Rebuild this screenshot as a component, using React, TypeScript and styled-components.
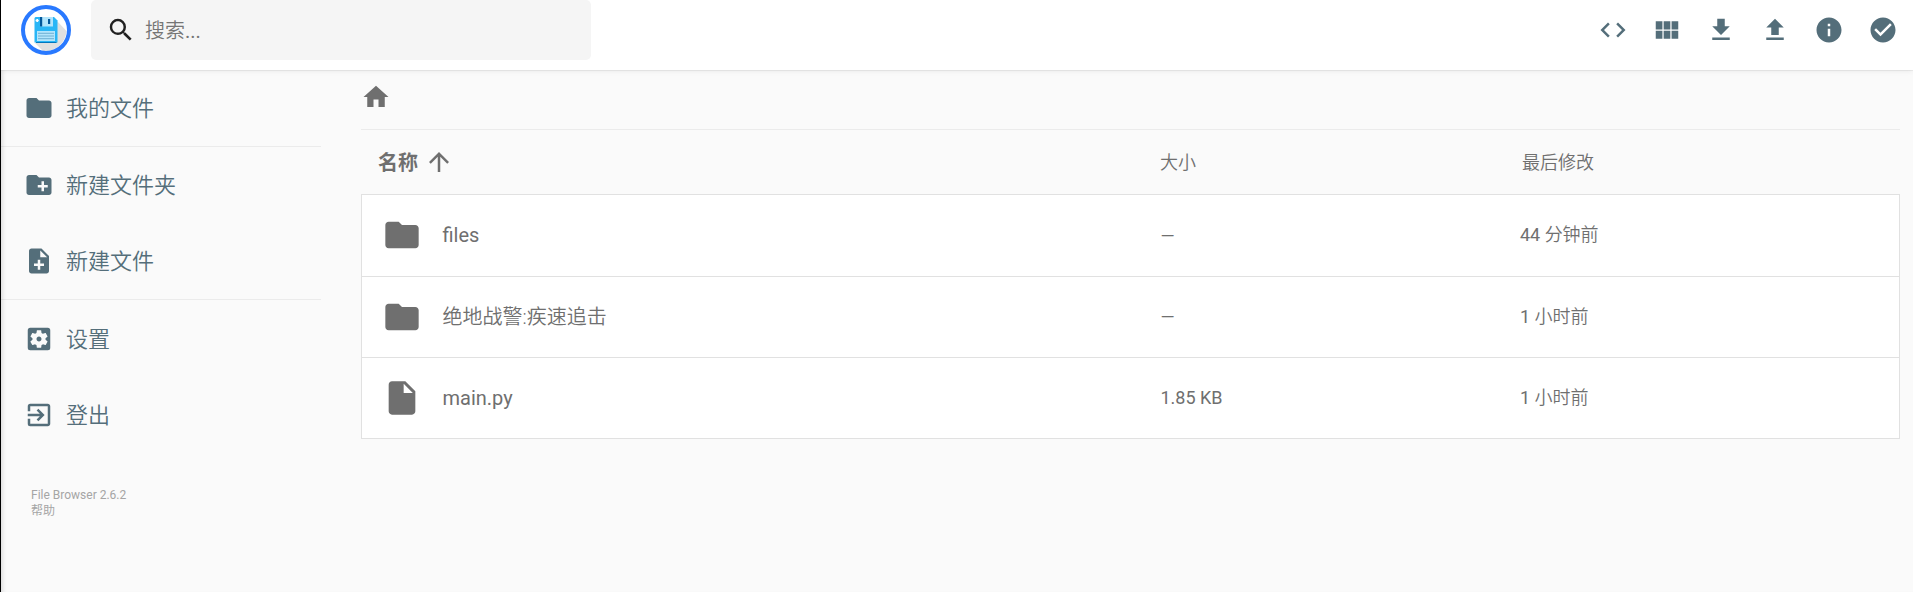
import React from 'react';
import styled, { createGlobalStyle, css } from 'styled-components';
import type { IconType } from 'react-icons';
import {
  MdArrowUpward,
  MdCheckCircle,
  MdCode,
  MdCreateNewFolder,
  MdExitToApp,
  MdFileDownload,
  MdFileUpload,
  MdFolder,
  MdHome,
  MdInfo,
  MdInsertDriveFile,
  MdNoteAdd,
  MdSearch,
  MdSettingsApplications,
  MdViewModule,
} from 'react-icons/md';

const colors = {
  slate: '#546e7a',
  text: '#6f6f6f',
  line: 'rgba(0, 0, 0, 0.06)',
  frame: '#e1e1e1',
};

const GlobalStyle = createGlobalStyle`
  * { box-sizing: border-box; }
  body {
    margin: 0;
    background: #fafafa;
    color: ${colors.text};
    font-family: Roboto, 'Noto Sans CJK SC', sans-serif;
    font-size: 20px;
    overflow: hidden;
  }
`;

const Window = styled.div`
  height: 592px;
  border-left: 1px solid #000;
  box-shadow: inset 5px 0 5px -4px rgba(0, 0, 0, 0.16);
`;

const Header = styled.header`
  position: relative;
  display: flex;
  align-items: flex-start;
  height: 70px;
  padding: 0 3px 0 20px;
  background: #fff;
  box-shadow: 0 1px 0 rgba(0, 0, 0, 0.05), 0 0 6px rgba(0, 0, 0, 0.1);
`;

const Logo = styled.svg`
  width: 50px;
  height: 50px;
  margin: 5px 20px 0 0;
`;

const SearchBox = styled.div`
  display: flex;
  align-items: center;
  width: 500px;
  height: 60px;
  padding: 0 15px;
  border-radius: 5px;
  background: #f5f5f5;
  color: #757575;

  svg {
    width: 30px;
    height: 30px;
    margin-right: 9px;
    color: #212121;
  }
`;

const Label = styled.span<{ $cjk?: boolean }>`
  padding-bottom: 2px;
  ${(p) => p.$cjk && css`font-weight: 350;`}
`;

const Actions = styled.div`
  display: flex;
  margin-left: auto;
`;

const ActionButton = styled.button`
  display: flex;
  align-items: center;
  height: 60px;
  padding: 0 12px;
  border: 0;
  background: none;
  color: ${colors.slate};

  svg {
    width: 30px;
    height: 30px;
  }
`;

const Body = styled.div`
  display: flex;
`;

const Sidebar = styled.nav`
  width: 320px;
  margin-right: 40px;
  flex: none;
`;

const NavGroup = styled.div<{ $last?: boolean }>`
  ${(p) => !p.$last && css`border-bottom: 1px solid ${colors.line};`}
  ${(p) => p.$last && css`padding-top: 1px;`}
`;

const NavItem = styled.a`
  display: flex;
  align-items: center;
  height: 76px;
  padding-left: 23px;
  color: ${colors.slate};
  font-size: 22px;

  svg {
    width: 30px;
    height: 30px;
    margin-right: 12px;
  }

  ${Label} {
    padding-bottom: 4px;
  }
`;

const Credits = styled.div`
  margin: 34px 0 0 30px;
  color: #a5a5a5;
  font-size: 12px;
  line-height: 16px;

  span {
    display: block;
  }
`;

const Main = styled.main`
  flex: 1;
  margin-right: 13px;
`;

const Breadcrumbs = styled.div`
  height: 60px;
  padding-top: 12px;
  border-bottom: 1px solid ${colors.line};

  svg {
    display: block;
    width: 30px;
    height: 30px;
  }
`;

const columns = css`
  display: grid;
  grid-template-columns: 778px 360px 1fr;
  align-items: center;
`;

const ListHeader = styled.div`
  ${columns}
  height: 64px;
  padding-left: 21px;
  font-size: 18px;
`;

const SortedColumn = styled.span`
  display: flex;
  align-items: center;
  margin-left: -4px;
  font-size: 20px;
  font-weight: 700;

  svg {
    width: 30px;
    height: 30px;
    margin-left: 6px;
  }
`;

const ModifiedHeading = styled(Label)`
  padding-left: 2px;
`;

const Listing = styled.div`
  border: 1px solid ${colors.frame};
  background: #fff;
`;

const FileRow = styled.div`
  ${columns}
  height: 81px;
  padding: 0 0 1px 20px;
  font-size: 18px;

  & + & {
    border-top: 1px solid ${colors.frame};
  }
`;

const FileName = styled.span`
  display: flex;
  align-items: center;
  font-size: 20px;

  svg {
    width: 40px;
    height: 40px;
    margin-right: 20.5px;
  }
`;

const Latin = styled.span`
  font-weight: 400;
`;

const Size = styled(Latin)`
  padding-left: 0.5px;
`;

const Modified = styled(Label)`
  padding-bottom: 4px;
`;

interface NavEntry {
  icon: IconType;
  label: string;
}

const navGroups: NavEntry[][] = [
  [{ icon: MdFolder, label: '我的文件' }],
  [
    { icon: MdCreateNewFolder, label: '新建文件夹' },
    { icon: MdNoteAdd, label: '新建文件' },
  ],
  [
    { icon: MdSettingsApplications, label: '设置' },
    { icon: MdExitToApp, label: '登出' },
  ],
];

const actions: { icon: IconType; title: string }[] = [
  { icon: MdCode, title: 'shell' },
  { icon: MdViewModule, title: 'view' },
  { icon: MdFileDownload, title: 'download' },
  { icon: MdFileUpload, title: 'upload' },
  { icon: MdInfo, title: 'info' },
  { icon: MdCheckCircle, title: 'select' },
];

const files = [
  { icon: MdFolder, name: 'files', cjk: false, size: '—', count: 44, unit: '分钟前' },
  { icon: MdFolder, name: '绝地战警:疾速追击', cjk: true, size: '—', count: 1, unit: '小时前' },
  { icon: MdInsertDriveFile, name: 'main.py', cjk: false, size: '1.85 KB', count: 1, unit: '小时前' },
];

function FloppyLogo() {
  return (
    <Logo viewBox="0 0 50 50">
      <circle cx="25" cy="25" r="23" fill="#fff" />
      <path d="M36 16L45.5 26A21.5 21.5 0 0 1 22 46L14 38z" fill="#e0e0e0" />
      <circle cx="25" cy="25" r="23" fill="none" stroke="#2979ff" strokeWidth="4" />
      <path d="M14.5 12H33L36.5 15.5V37.5H13.5V13z" fill="#29b6f6" />
      <path d="M15 37h20.5v1H15z" fill="#0277bd" />
      <path d="M19 12h13v9.5H19z" fill="#b3e5fc" />
      <path d="M19 12h2.2v9.5H19zM27 14h2.2v5H27z" fill="#01579b" />
      <path d="M14.6 14.7h3.2v1.6h-3.2zM15.4 13.9h1.6v3.2h-1.6z" fill="#fff" />
      <path d="M16 26h18v10H16z" fill="#b3e5fc" />
      <path d="M17 28.3h16M17 31h16M17 33.7h16" stroke="#64a9cf" strokeWidth="0.9" />
    </Logo>
  );
}

export default function App() {
  return (
    <>
      <GlobalStyle />
      <Window>
        <Header>
          <FloppyLogo />
          <SearchBox>
            <MdSearch />
            <Label $cjk>
              搜索<Latin>...</Latin>
            </Label>
          </SearchBox>
          <Actions>
            {actions.map(({ icon: Icon, title }) => (
              <ActionButton key={title} aria-label={title}>
                <Icon />
              </ActionButton>
            ))}
          </Actions>
        </Header>
        <Body>
          <Sidebar>
            {navGroups.map((group, i) => (
              <NavGroup key={i} $last={i === navGroups.length - 1}>
                {group.map(({ icon: Icon, label }) => (
                  <NavItem key={label}>
                    <Icon />
                    <Label $cjk>{label}</Label>
                  </NavItem>
                ))}
              </NavGroup>
            ))}
            <Credits>
              <span>File Browser 2.6.2</span>
              <span>帮助</span>
            </Credits>
          </Sidebar>
          <Main>
            <Breadcrumbs>
              <MdHome />
            </Breadcrumbs>
            <ListHeader>
              <SortedColumn>
                <Label>名称</Label>
                <MdArrowUpward />
              </SortedColumn>
              <Label $cjk>大小</Label>
              <ModifiedHeading $cjk>最后修改</ModifiedHeading>
            </ListHeader>
            <Listing>
              {files.map(({ icon: Icon, name, cjk, size, count, unit }) => (
                <FileRow key={name}>
                  <FileName>
                    <Icon />
                    {cjk ? <Label $cjk>{name}</Label> : <Latin>{name}</Latin>}
                  </FileName>
                  <Size>{size}</Size>
                  <Modified $cjk>
                    <Latin>{count}</Latin> {unit}
                  </Modified>
                </FileRow>
              ))}
            </Listing>
          </Main>
        </Body>
      </Window>
    </>
  );
}
